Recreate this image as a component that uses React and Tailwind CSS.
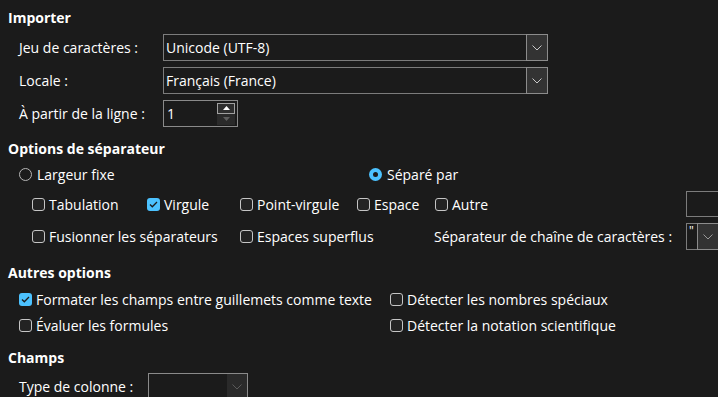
import React from 'react';

const Chevron = ({ color = '#c8c8c8' }) => (
    <svg width="10" height="6" viewBox="0 0 10 6" fill="none">
        <path d="M0.5 0.5L5 5L9.5 0.5" stroke={color} strokeWidth="1" />
    </svg>
);

const Heading = ({ children, className = '' }) => (
    <div className={`h-6 leading-6 font-bold ${className}`}>{children}</div>
);

const Check = ({ checked, label, className = '' }) => (
    <div className={`flex items-center gap-[4px] shrink-0 ${className}`}>
        {checked ? (
            <span className="w-[13px] h-[13px] rounded-[3px] bg-[#4cc2ff] flex items-center justify-center">
                <svg width="9" height="7" viewBox="0 0 9 7" fill="none">
                    <path d="M1 3.5L3.3 5.8L8 1" stroke="#1c1c1c" strokeWidth="1.3" />
                </svg>
            </span>
        ) : (
            <span className="w-[13px] h-[13px] rounded-[3px] border border-[#c5c5c5] bg-[#232323]" />
        )}
        <span className="whitespace-nowrap">{label}</span>
    </div>
);

const Radio = ({ checked, label, className = '' }) => (
    <div className={`flex items-center gap-[5px] shrink-0 ${className}`}>
        {checked ? (
            <span className="w-[13px] h-[13px] rounded-full bg-[#4cc2ff] flex items-center justify-center">
                <span className="w-[5px] h-[5px] rounded-full bg-[#1c1c1c]" />
            </span>
        ) : (
            <span className="w-[13px] h-[13px] rounded-full border border-[#b5b5b5]" />
        )}
        <span className="whitespace-nowrap">{label}</span>
    </div>
);

const Combo = ({ value, className = '' }) => (
    <div className={`flex h-full border border-[#7c7c7c] ${className}`}>
        <div className="flex-1 pl-[2px] flex items-center whitespace-nowrap">{value}</div>
        <div className="w-[22px] -my-px -mr-px border border-[#8c8c8c] bg-[#333333] flex items-center justify-center">
            <Chevron />
        </div>
    </div>
);

const Row = ({ label, children, className = '' }) => (
    <div className={`flex items-center h-[27px] ${className}`}>
        <span className="w-[144px] shrink-0">{label}</span>
        {children}
    </div>
);

export default function App() {
    return (
        <div className="w-[718px] h-[397px] overflow-hidden bg-[#1b1b1b] text-[#ffffff] text-[14px] font-['Open_Sans',sans-serif] pl-2 pt-[6px]">
            {/* Importer */}
            <Heading>Importer</Heading>
            <div className="pl-[11px] mt-1 flex flex-col gap-[6px]">
                <Row label="Jeu de caractères :">
                    <Combo value="Unicode (UTF-8)" className="w-[385px]" />
                </Row>
                <Row label="Locale :">
                    <Combo value="Français (France)" className="w-[385px]" />
                </Row>
                <Row label="À partir de la ligne :" className="h-[26px]">
                    <div className="w-[75px] h-full border border-[#8a8a8a] flex items-center pl-[3px] pr-[2px]">
                        <span className="flex-1">1</span>
                        <div className="flex flex-col w-[18px]">
                            <div className="h-[11px] border border-[#a0a0a0] bg-[#2e2e2e] flex items-center justify-center">
                                <svg width="7" height="4" viewBox="0 0 7 4"><path d="M0 4L3.5 0L7 4Z" fill="#ffffff" /></svg>
                            </div>
                            <div className="h-[11px] bg-[#2a2a2a] flex items-center justify-center">
                                <svg width="7" height="4" viewBox="0 0 7 4"><path d="M0 0L3.5 4L7 0Z" fill="#5e5e5e" /></svg>
                            </div>
                        </div>
                    </div>
                </Row>
            </div>

            {/* Options de séparateur */}
            <Heading className="mt-[10px]">Options de séparateur</Heading>
            <div className="pl-[11px] flex items-center h-[26px]">
                <Radio label="Largeur fixe" className="w-[350px]" />
                <Radio checked label="Séparé par" />
            </div>
            <div className="pl-[24px] mt-1 flex items-center h-[26px]">
                <Check label="Tabulation" className="w-[115px]" />
                <Check checked label="Virgule" className="w-[93px]" />
                <Check label="Point-virgule" className="w-[117px]" />
                <Check label="Espace" className="w-[78px]" />
                <Check label="Autre" className="w-[251px]" />
                <div className="w-[40px] h-full border border-[#7c7c7c] shrink-0" />
            </div>
            <div className="pl-[24px] mt-[6px] flex items-center h-[27px]">
                <Check label="Fusionner les séparateurs" className="w-[208px]" />
                <Check label="Espaces superflus" className="w-[194px]" />
                <span className="w-[252px] shrink-0 whitespace-nowrap">Séparateur de chaîne de caractères :</span>
                <div className="w-[40px] h-full shrink-0 flex border border-[#7c7c7c]">
                    <div className="w-[10px] pl-[2px] text-[12px] leading-[14px]">"</div>
                    <div className="w-[22px] -my-px border border-[#8c8c8c] bg-[#333333] flex items-center justify-center">
                        <Chevron color="#9a9a9a" />
                    </div>
                </div>
            </div>

            {/* Autres options */}
            <Heading className="mt-[11px]">Autres options</Heading>
            <div className="pl-[11px] mt-px flex items-center h-[26px]">
                <Check checked label="Formater les champs entre guillemets comme texte" className="w-[371px]" />
                <Check label="Détecter les nombres spéciaux" />
            </div>
            <div className="pl-[11px] flex items-center h-[26px]">
                <Check label="Évaluer les formules" className="w-[371px]" />
                <Check label="Détecter la notation scientifique" />
            </div>

            {/* Champs */}
            <Heading className="mt-2">Champs</Heading>
            <div className="pl-[11px] mt-[3px] flex items-center h-[27px]">
                <span className="w-[129px] shrink-0">Type de colonne :</span>
                <div className="w-[100px] h-full flex border border-[#8a8a8a]">
                    <div className="flex-1" />
                    <div className="w-[20px] bg-[#2a2a2a] flex items-center justify-center">
                        <Chevron color="#5a5a5a" />
                    </div>
                </div>
            </div>
        </div>
    );
}
